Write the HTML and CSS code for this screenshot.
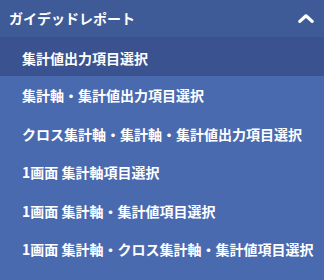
FILE: index.html
```html
<!DOCTYPE html>
<html lang="ja">
<head>
<meta charset="utf-8">
<link rel="stylesheet" href="styles.css">
</head>
<body>
<div class="panel">
  <div class="header">
    <span class="title">ガイデッドレポート</span>
    <svg class="chev" width="16" height="9" viewBox="0 0 16 9"><path d="M1.8 7.4 L8 1.8 L14.2 7.4" fill="none" stroke="#fff" stroke-width="3.2" stroke-linecap="round" stroke-linejoin="round"/></svg>
  </div>
  <ul class="list">
    <li class="item selected">集計値出力項目選択</li>
    <li class="item">集計軸・集計値出力項目選択</li>
    <li class="item">クロス集計軸・集計軸・集計値出力項目選択</li>
    <li class="item">1画面 集計軸項目選択</li>
    <li class="item">1画面 集計軸・集計値項目選択</li>
    <li class="item">1画面 集計軸・クロス集計軸・集計値項目選択</li>
  </ul>
</div>
</body>
</html>
```

FILE: styles.css
```css
html, body {
  margin: 0;
  padding: 0;
}
body {
  width: 324px;
  height: 280px;
  background: #4a6ab0;
  font-family: "Noto Sans CJK JP", "Noto Sans", sans-serif;
  color: #fff;
  overflow: hidden;
}
.panel {
  display: flex;
  flex-direction: column;
}
.header {
  height: 37px;
  background: #3f5b97;
  display: flex;
  align-items: center;
  justify-content: space-between;
  padding: 0 10px 0 9px;
}
.title {
  font-size: 14px;
  font-weight: 700;
  line-height: 1;
  margin-top: -1px;
}
.chev {
  display: block;
  margin-top: -1px;
}
.list {
  list-style: none;
  margin: 0;
  padding: 0;
}
.item {
  height: 38.5px;
  display: flex;
  align-items: center;
  padding: 0 22px;
  font-size: 14px;
  font-weight: 700;
  line-height: 1;
  white-space: nowrap;
}
.item.selected {
  background: #3a5290;
  height: 39px;
  padding-top: 2px;
  box-sizing: border-box;
}
```
